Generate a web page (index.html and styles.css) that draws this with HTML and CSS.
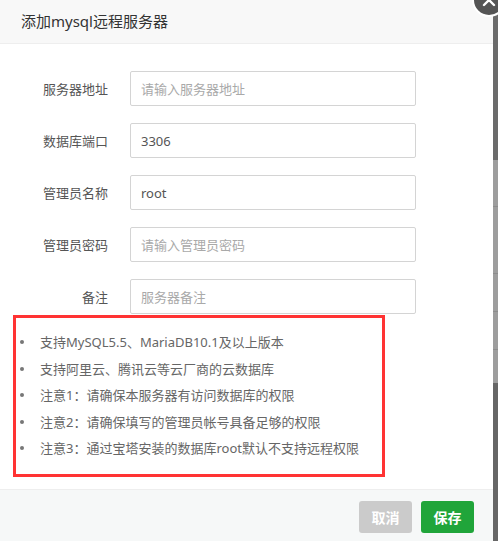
FILE: index.html
```html
<!DOCTYPE html>
<html lang="zh-CN">
<head>
<meta charset="utf-8">
<title>添加mysql远程服务器</title>
<link rel="stylesheet" href="styles.css">
</head>
<body>
<div class="dialog">
  <div class="dialog-title">添加mysql远程服务器</div>
  <div class="dialog-body">
    <div class="form">
      <div class="row"><span class="label">服务器地址</span><input class="field" type="text" placeholder="请输入服务器地址"></div>
      <div class="row"><span class="label">数据库端口</span><input class="field" type="text" value="3306"></div>
      <div class="row"><span class="label">管理员名称</span><input class="field" type="text" value="root"></div>
      <div class="row"><span class="label">管理员密码</span><input class="field" type="text" placeholder="请输入管理员密码"></div>
      <div class="row"><span class="label">备注</span><input class="field" type="text" placeholder="服务器备注"></div>
    </div>
    <ul class="tips">
      <li>支持MySQL5.5、MariaDB10.1及以上版本</li>
      <li>支持阿里云、腾讯云等云厂商的云数据库</li>
      <li>注意1：请确保本服务器有访问数据库的权限</li>
      <li>注意2：请确保填写的管理员帐号具备足够的权限</li>
      <li>注意3：通过宝塔安装的数据库root默认不支持远程权限</li>
    </ul>
  </div>
  <div class="dialog-footer">
    <button class="btn btn-cancel">取消</button>
    <button class="btn btn-save">保存</button>
  </div>
</div>
<div class="close-btn">
  <svg width="30" height="30" viewBox="0 0 30 30"><path d="M10 10 L20 20 M20 10 L10 20" stroke="#fff" stroke-width="2.4" stroke-linecap="round" fill="none"/></svg>
</div>
</body>
</html>
```
FILE: styles.css
```css
html, body {
  margin: 0;
  padding: 0;
  height: 541px;
  overflow: hidden;
}
body {
  font-family: "Noto Sans", "Noto Sans CJK SC", sans-serif;
  background: linear-gradient(to bottom,
    #6b6b6b 0 160px,
    #9d9d9d 160px 206px, #8c8c8c 206px 207px,
    #9d9d9d 207px 273px, #8c8c8c 273px 274px,
    #9d9d9d 274px 311px, #8c8c8c 311px 312px,
    #9d9d9d 312px 349px, #8c8c8c 349px 350px,
    #9d9d9d 350px 383px,
    #666 383px);
  position: relative;
}
.dialog {
  width: 493px;
  height: 541px;
  background: #fff;
  display: flex;
  flex-direction: column;
}
.dialog-title {
  height: 43px;
  line-height: 43px;
  padding-left: 21px;
  background: #f8f8f8;
  border-bottom: 1px solid #eee;
  font-size: 15px;
  color: #333;
}
.dialog-body {
  flex: 1;
}
.form {
  padding-top: 27px;
  display: flex;
  flex-direction: column;
  gap: 17px;
}
.row {
  display: flex;
  align-items: center;
  height: 35px;
}
.label {
  width: 108px;
  margin-right: 22px;
  text-align: right;
  font-size: 13px;
  color: #555;
}
.field {
  width: 286px;
  height: 35px;
  box-sizing: border-box;
  border: 1px solid #d4d4d4;
  border-radius: 2px;
  padding: 0 10px;
  font-family: inherit;
  font-size: 13px;
  color: #555;
  outline: none;
}
.field::placeholder {
  color: #a9a9a9;
}
.tips {
  list-style: none;
  margin: 1px 0 0 13px;
  width: 372px;
  box-sizing: border-box;
  border: 3px solid #f33;
  padding: 11px 0 12px 0;
}
.tips li {
  position: relative;
  padding-left: 24px;
  line-height: 26.5px;
  font-size: 13px;
  color: #666;
}
.tips li::before {
  content: "";
  position: absolute;
  left: 4px;
  top: 11px;
  width: 4px;
  height: 4px;
  border-radius: 50%;
  background: #777;
}
.dialog-footer {
  height: 52px;
  box-sizing: border-box;
  border-top: 1px solid #eee;
  background: #f6f8f8;
  padding: 11px 19px 0 0;
  display: flex;
  justify-content: flex-end;
  align-items: flex-start;
  gap: 9px;
}
.btn {
  width: 53px;
  height: 32px;
  border: none;
  border-radius: 3px;
  color: #fff;
  font-family: inherit;
  font-size: 14px;
  font-weight: bold;
  padding: 0;
}
.btn-cancel {
  background: #cbcbcb;
}
.btn-save {
  background: #20a53a;
}
.close-btn {
  position: absolute;
  left: 474px;
  top: -15px;
  width: 30px;
  height: 30px;
  border-radius: 50%;
  background: #555;
  box-shadow: 0 0 0 2px #fff;
}
.close-btn svg {
  display: block;
}
```
